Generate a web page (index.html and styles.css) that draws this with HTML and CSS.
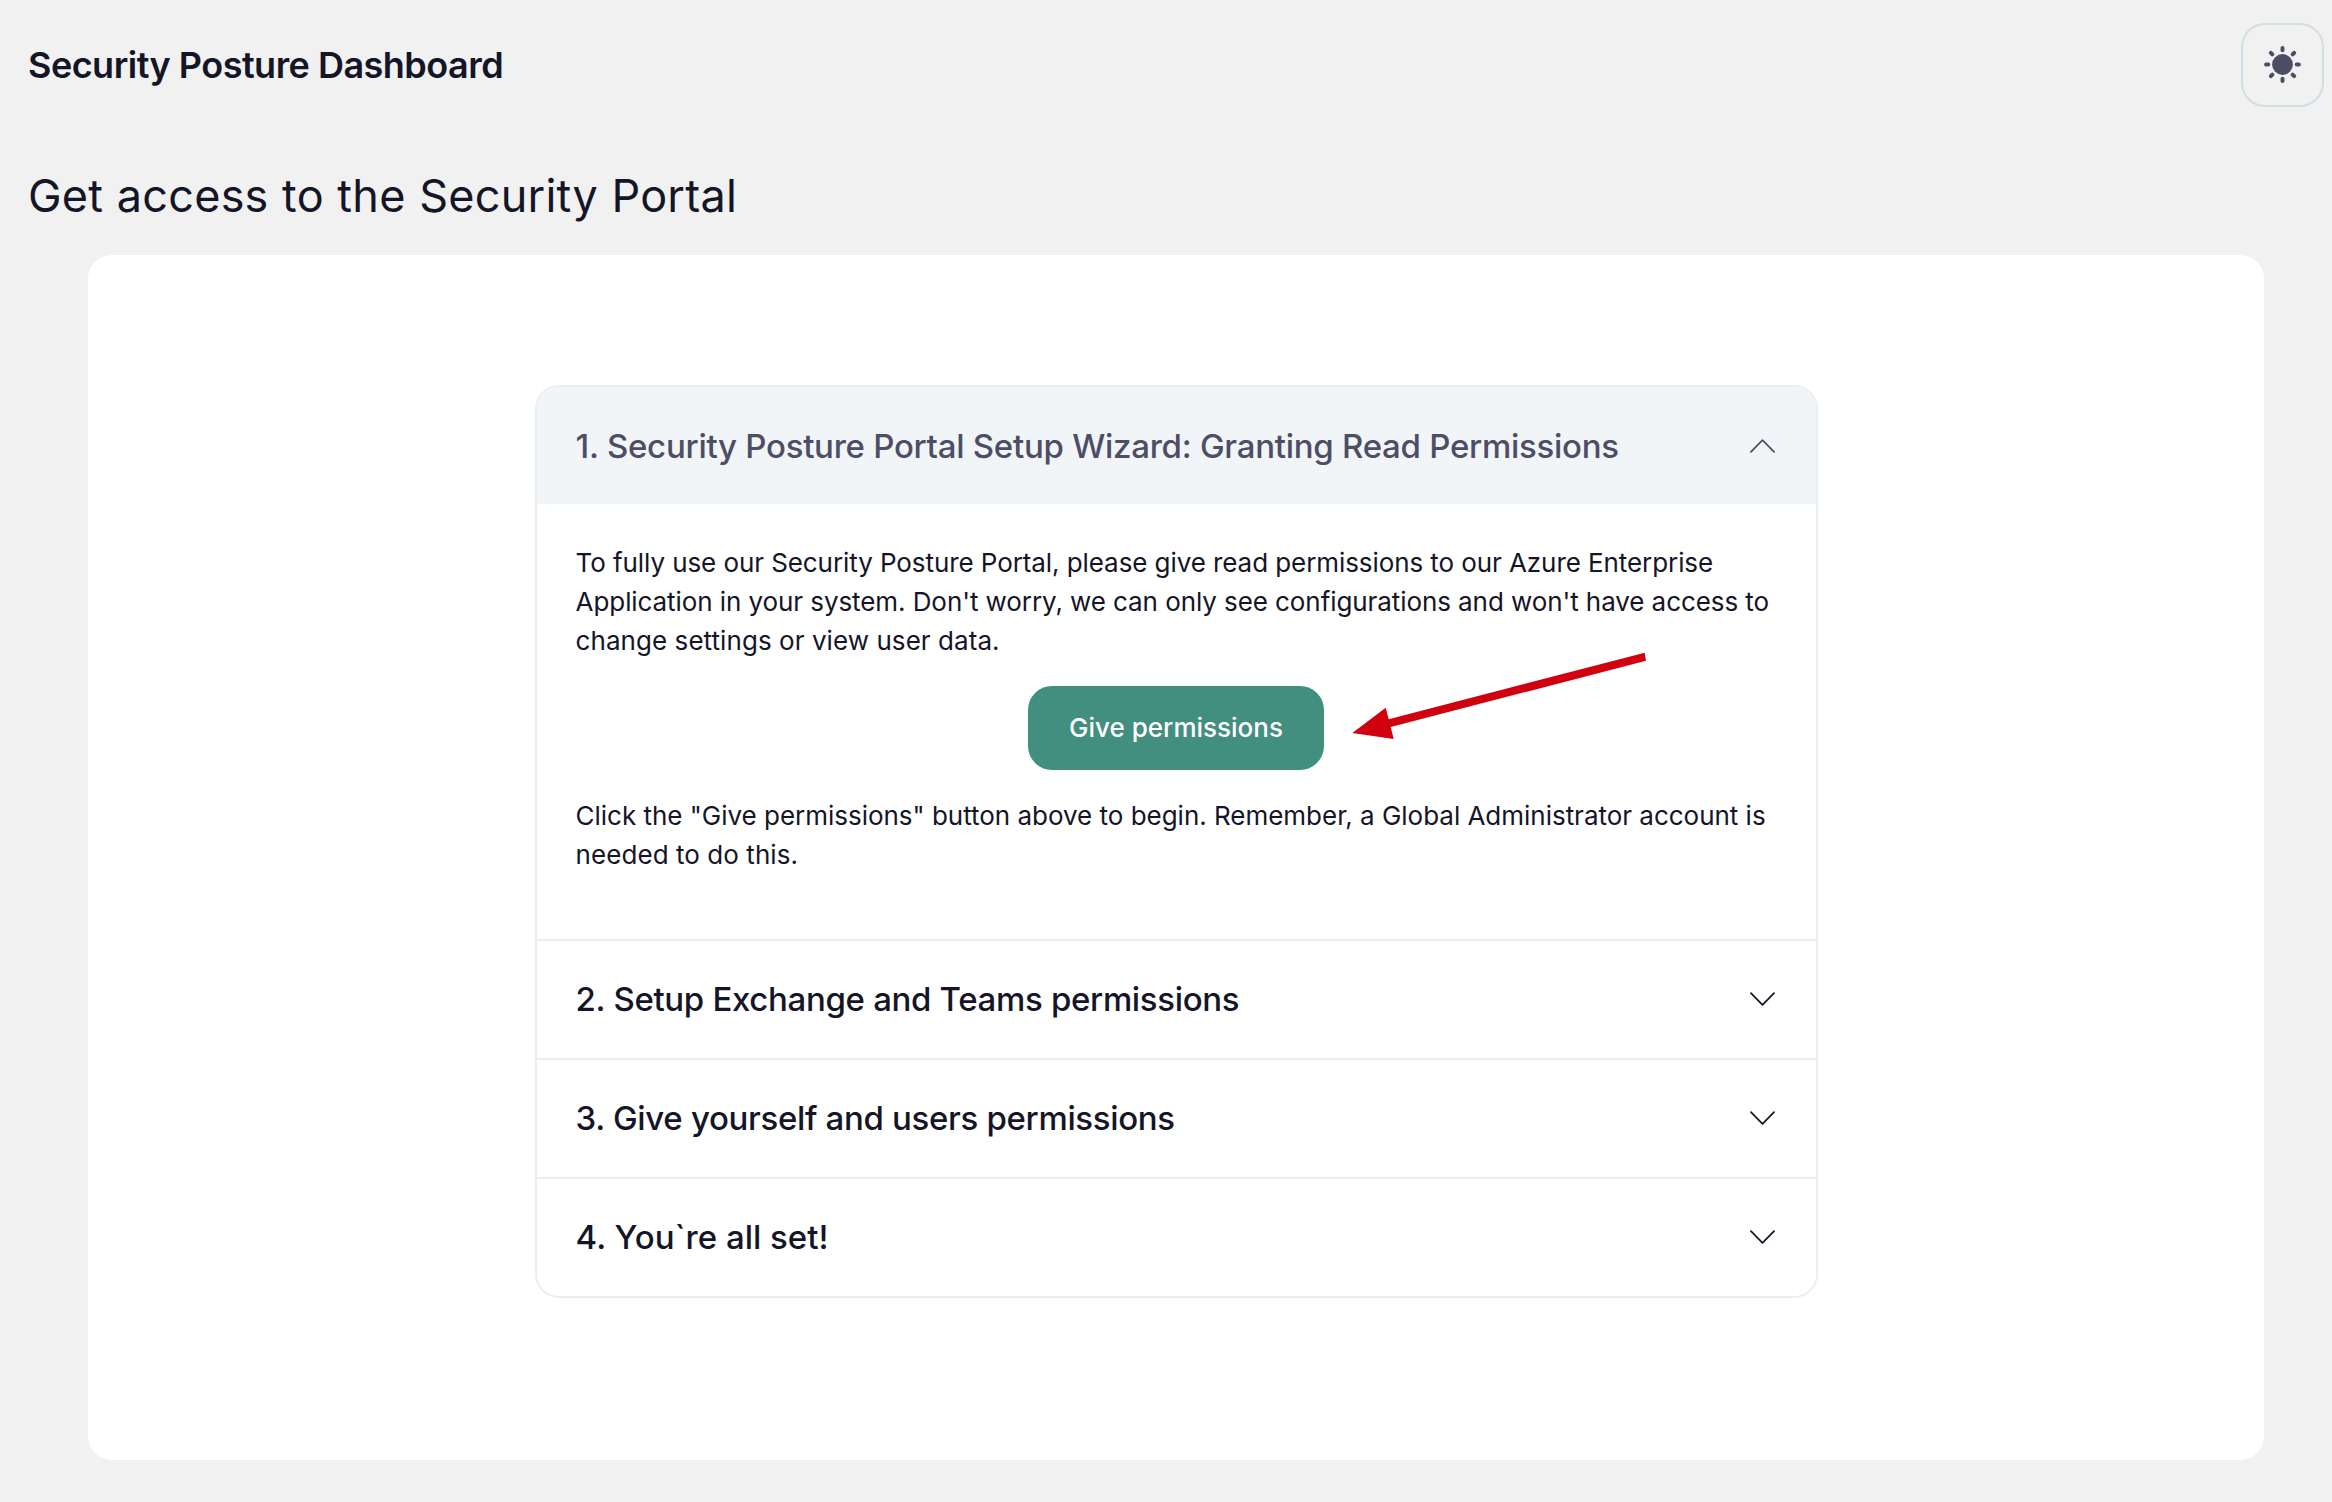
FILE: index.html
```html
<!DOCTYPE html>
<html lang="en">
<head>
<meta charset="utf-8">
<title>Security Posture Dashboard</title>
<link rel="stylesheet" href="styles.css">
</head>
<body>
<header class="topbar">
  <h1 class="brand">Security Posture Dashboard</h1>
  <button class="theme-toggle" aria-label="Toggle theme">
    <svg class="sun" viewBox="0.5 0.5 37 37">
      <circle cx="19" cy="19" r="10.4" fill="currentColor"/>
      <path d="M19 2.6v2.2M19 33.2v2.2M2.6 19h2.2M33.2 19h2.2M7.4 7.4l1.4 1.4M29.2 29.2l1.4 1.4M7.4 30.6l1.4-1.4M29.2 8.8l1.4-1.4" fill="none" stroke="currentColor" stroke-width="4" stroke-linecap="round"/>
    </svg>
  </button>
</header>
<main class="page">
  <h2 class="page-title">Get access to the Security Portal</h2>
  <section class="card">
    <div class="accordion">
      <section class="item">
        <button class="item-header open"><span>1. Security Posture Portal Setup Wizard: Granting Read Permissions</span>
          <svg class="chevron" viewBox="0 0 26 14"><path d="M1 13 13 1l12 12"/></svg></button>
        <div class="item-body">
          <p class="text intro">To fully use our Security Posture Portal, please give read permissions to our Azure Enterprise<br>Application in your system. Don't worry, we can only see configurations and won't have access to<br><span class="last-line">change settings or view user data.</span></p>
          <div class="action">
            <button class="primary">Give permissions</button>
            <svg class="arrow" viewBox="0 0 296 88"><path d="M.3 81 33.700 55.700l3 11.600L292.700.7l1.300 8L38.700 75l3 12z"/></svg>
          </div>
          <p class="text note">Click the "Give permissions" button above to begin. Remember, a Global Administrator account is<br><span class="last-line">needed to do this.</span></p>
        </div>
      </section>
      <section class="item">
        <button class="item-header"><span>2. Setup Exchange and Teams permissions</span>
          <svg class="chevron" viewBox="0 0 26 14"><path d="M1 1l12 12L25 1"/></svg></button>
      </section>
      <section class="item">
        <button class="item-header"><span>3. Give yourself and users permissions</span>
          <svg class="chevron" viewBox="0 0 26 14"><path d="M1 1l12 12L25 1"/></svg></button>
      </section>
      <section class="item">
        <button class="item-header final"><span>4. You`re all set!</span>
          <svg class="chevron" viewBox="0 0 26 14"><path d="M1 1l12 12L25 1"/></svg></button>
      </section>
    </div>
  </section>
</main>
</body>
</html>
```
FILE: styles.css
```css
* { box-sizing: border-box; }
body {
  margin: 0;
  min-height: 1502px;
  background: #f1f1f1;
  color: #151528;
  font-family: Inter, "Liberation Sans", sans-serif;
}
h1, h2, p { margin: 0; }
button { font: inherit; color: inherit; border: 0; margin: 0; cursor: pointer; }
.topbar {
  display: flex;
  align-items: center;
  justify-content: space-between;
  height: 130px;
  padding: 0 8px 0 28px;
}
.brand { font-size: 36px; line-height: 44px; font-weight: 600; letter-spacing: -0.52px; }
.theme-toggle {
  display: flex;
  align-items: flex-start;
  justify-content: center;
  width: 83px;
  height: 84px;
  padding: 21px 0 0;
  border: 2px solid #d1dee6;
  border-radius: 24px;
  background: transparent;
  color: #4d4d66;
}
.sun { width: 37px; height: 37px; }
.page { padding: 36px 68px 0 28px; }
.page-title {
  font-size: 45px;
  line-height: 60px;
  font-weight: 400;
  letter-spacing: 0.24px;
  word-spacing: 0.6px;
}
.card {
  height: 1205px;
  margin: 29px 0 0 60px;
  padding: 130px 446px 0 447px;
  border-radius: 24px;
  background: #fff;
}
.accordion {
  overflow: hidden;
  border: 2px solid #e9eef2;
  border-radius: 24px;
}
.item + .item { border-top: 2px solid #e9eef2; }
.item-header {
  display: flex;
  align-items: center;
  justify-content: space-between;
  width: 100%;
  height: 117px;
  padding: 0 41.5px 2px 38.6px;
  background: #fff;
  font-size: 33px;
  font-weight: 500;
  letter-spacing: -0.33px;
  text-align: left;
}
.item-header.open {
  padding-bottom: 0;
  background: #f1f5f8;
  color: #4d4d66;
  letter-spacing: -0.27px;
}
.item-header.final { letter-spacing: 0; }
.chevron {
  width: 25px;
  height: 14px;
  fill: none;
  stroke: currentColor;
  stroke-width: 1.8;
  stroke-linecap: round;
  stroke-linejoin: round;
}
.item-body { height: 435px; padding: 39px 39.4px 0 38.6px; }
.text { font-size: 26px; line-height: 39px; white-space: nowrap; }
.intro { letter-spacing: -0.08px; }
.note { letter-spacing: -0.02px; }
.last-line { letter-spacing: 0.06px; }
.action {
  position: relative;
  display: flex;
  justify-content: center;
  padding: 26px 0;
}
.primary {
  width: 296px;
  height: 84px;
  margin-right: 1.2px;
  padding: 0 0 2px 1px;
  border-radius: 24px;
  background: #428e7f;
  color: #fff;
  font-size: 26px;
  font-weight: 500;
}
.arrow {
  position: absolute;
  left: 776.4px;
  top: -8px;
  width: 296px;
  height: 88px;
  fill: #d1000f;
}
```
